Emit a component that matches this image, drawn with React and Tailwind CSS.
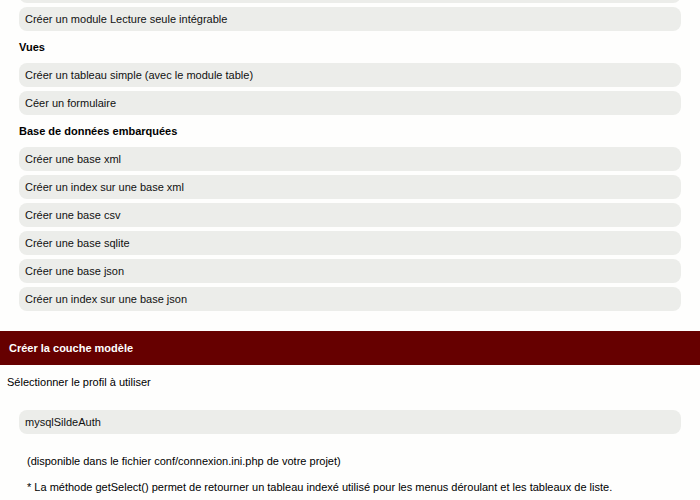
// App.jsx
const sections = [
  { title: null, items: ["Créer un module Lecture seule intégrable"] },
  {
    title: "Vues",
    items: ["Créer un tableau simple (avec le module table)", "Céer un formulaire"],
  },
  {
    title: "Base de données embarquées",
    items: [
      "Créer une base xml",
      "Créer un index sur une base xml",
      "Créer une base csv",
      "Créer une base sqlite",
      "Créer une base json",
      "Créer un index sur une base json",
    ],
  },
];

function Item({ children }) {
  return (
    <div className="h-6 rounded-lg bg-[#ecedea] px-1.5 flex items-center text-[11px] text-[#111]">
      {children}
    </div>
  );
}

export default function App() {
  return (
    <div
      className="w-[700px] h-[500px] overflow-hidden bg-[#fefefd] text-black"
      style={{ fontFamily: '"Liberation Sans", Arial, sans-serif' }}
    >
      {/* list of actions, top one is scrolled out of view */}
      <div className="-mt-[21px] px-[19px] flex flex-col gap-1">
        <Item />
        {sections.map((s, i) => (
          <div key={i} className="flex flex-col gap-1">
            {s.title && (
              <div className="h-6 flex items-center text-[11px] font-bold">{s.title}</div>
            )}
            {s.items.map((t) => (
              <Item key={t}>{t}</Item>
            ))}
          </div>
        ))}
      </div>

      <div className="mt-5 h-[34px] bg-[#660000] flex items-center px-[9px] text-[11px] font-bold text-white">
        Créer la couche modèle
      </div>

      <div className="px-[7px] pt-[9px] text-[11px] leading-4">Sélectionner le profil à utiliser</div>

      <div className="px-[19px] mt-5">
        <Item>mysqlSildeAuth</Item>
      </div>

      <div className="pl-[27px] mt-[19px] text-[11px] leading-4 flex flex-col gap-2.5">
        <div>(disponible dans le fichier conf/connexion.ini.php de votre projet)</div>
        <div>* La méthode getSelect() permet de retourner un tableau indexé utilisé pour les menus déroulant et les tableaux de liste.</div>
      </div>
    </div>
  );
}
